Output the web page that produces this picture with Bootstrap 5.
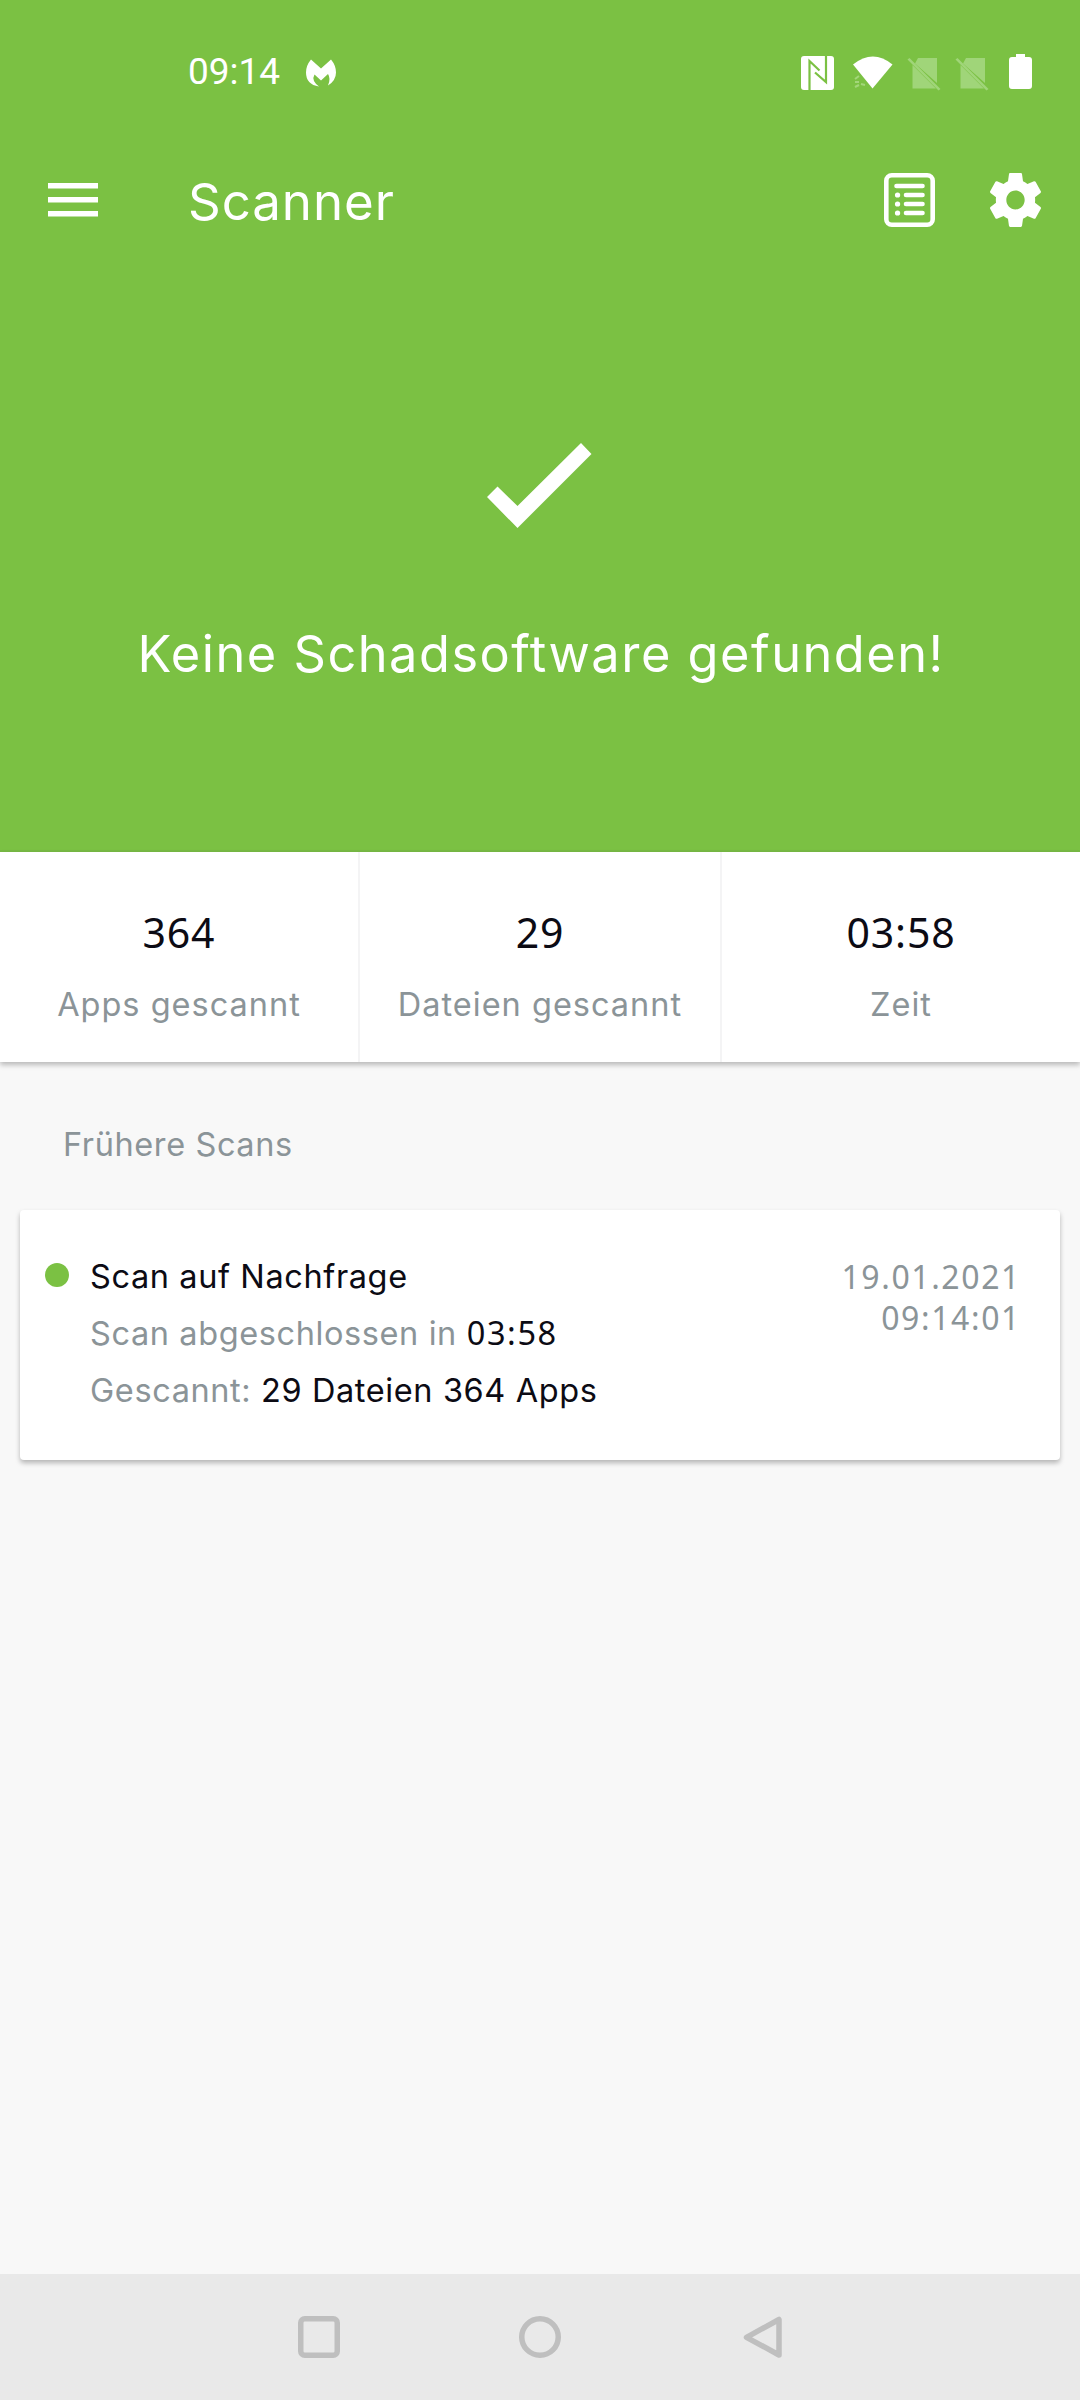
<!DOCTYPE html>
<html lang="de">
<head>
<meta charset="utf-8">
<meta name="viewport" content="width=device-width, initial-scale=1">
<title>Scanner</title>
<link href="https://cdn.jsdelivr.net/npm/bootstrap@5.3.0/dist/css/bootstrap.min.css" rel="stylesheet">
<style>
  :root { --scan-green: #7bc143; --scan-ink: #0c0b14; --scan-muted: #8b9498; }
  body { font-family: Inter, "Noto Sans", sans-serif; color: var(--scan-ink); background: #f8f8f8; font-size: 32.5px; letter-spacing: .6px; }
  svg { display: block; flex: none; }
  .phone { height: 2400px; overflow: hidden; }
  .top-green { background: var(--scan-green); height: 852px; border-bottom: 2px solid #77b944; }
  .status-bar { padding: 45px 48px 0 188px; height: 98px; }
  .clock { font-family: Roboto, sans-serif; font-size: 37px; letter-spacing: 0; line-height: 53px; width: 118px; }
  .app-bar { height: 204px; padding: 0 39px 0 48px; }
  .app-title { font-size: 51px; line-height: 70px; letter-spacing: .95px; margin: 3px 0 0 90px; }
  .gear { margin-left: 55px; }
  .hero { padding-top: 141px; }
  .tick { margin: 0 auto; padding-right: 1px; }
  .hero-text { font-size: 50.5px; line-height: 70px; letter-spacing: 1.5px; margin-top: 91px; padding-left: 2px; }
  .stats { height: 210px; box-shadow: 0 3px 5px rgba(0,0,0,.25); position: relative; }
  .stat { padding-top: 50px; }
  .stat:nth-child(1) { border-right: 2px solid #f4f4f5; }
  .stat:nth-child(3) { border-left: 2px solid #f4f4f5; }
  .stat-num { font-family: "Noto Sans", sans-serif; font-size: 41px; line-height: 60px; letter-spacing: .8px; }
  .stat-label { line-height: 46px; letter-spacing: 1px; margin-top: 20px; }
  .muted { color: var(--scan-muted); }
  .section-title { margin: 60px 0 0 63px; line-height: 46px; }
  .scan-card { margin: 42px 20px 0 20px; height: 250px; border-radius: 4px; background: #fff; box-shadow: 0 3px 5px rgba(0,0,0,.27); padding: 38px 39px 0 25px; }
  .dot { width: 24px; height: 24px; border-radius: 50%; background: var(--scan-green); margin: 15px 21px 0 0; flex: none; }
  .scan-line { line-height: 57px; }
  .scan-num { font-family: "Noto Sans", sans-serif; line-height: 1; letter-spacing: 1.6px; }
  .scan-date { font-family: "Noto Sans", sans-serif; font-size: 32px; line-height: 41px; letter-spacing: 1.6px; margin-top: 8px; }
  .nav-strip { height: 126px; background: #e9e9e9; padding: 42px 298px 0; }
</style>
<script src="https://cdn.jsdelivr.net/npm/bootstrap@5.3.0/dist/js/bootstrap.bundle.min.js"></script>
</head>
<body>
<div class="phone d-flex flex-column">
  <header class="top-green text-white">
    <div class="status-bar d-flex align-items-start">
      <div class="clock">09:14</div>
      <svg width="30" height="54" viewBox="306 45.500 30 54" fill="#fff"><path d="M311 60 L321 69 L331 60 Q336 66 336 73 Q336 81 328 86 Q331 79 328 74.500 L321 81 L314.500 75 Q311 81 319 87 Q306 85 306 73 Q306 66 311 60Z"/></svg>
      <svg class="ms-auto" width="231" height="54" viewBox="801 45 231 54">
        <rect x="801" y="56" width="33" height="34" rx="3" fill="#fff"/>
        <path d="M809.500 90V61L819.500 70.500M826 56V82L815 72.500" fill="none" stroke="#7bc143" stroke-width="2.200"/>
        <path d="M853 64.500Q873 48.500 892.500 64.500L872.500 88.500Z" fill="#fff"/>
        <path d="M855 79l4-3M855 82h4M855 87l4-2M861 84l4 1" stroke="#a3d67a" stroke-width="2"/>
        <g fill="#a0d579">
          <path d="M918 58h19v25L915 63.500ZM912.500 65L936 88.500H912.500Z"/>
          <path d="M907.500 59.500l2-1.500 31 31-2 1.500Z"/>
          <path d="M966 58h19v25L963 63.500ZM960.500 65L984 88.500H960.500Z"/>
          <path d="M955.500 59.500l2-1.500 31 31-2 1.500Z"/>
        </g>
        <path d="M1016 54h9v3h4q3 0 3 3v26q0 3-3 3h-17q-3 0-3-3V60q0-3 3-3h4Z" fill="#fff"/>
      </svg>
    </div>
    <div class="app-bar d-flex align-items-center">
      <svg width="50" height="34" fill="#fff"><path d="M0 0h50v5.500H0zM0 14h50v5.500H0zM0 28h50v5.500H0z"/></svg>
      <div class="app-title">Scanner</div>
      <svg class="ms-auto" width="51" height="54" viewBox="0 0 51 54" fill="none" stroke="#fff" stroke-linecap="round">
        <rect x="2.300" y="2.300" width="46.400" height="49.400" rx="5.500" stroke-width="4.600"/>
        <path d="M12.500 13h26M22 22h16.500M22 31h16.500M22 40h16.500" stroke-width="4.600"/>
        <path d="M13.500 22h.1M13.500 31h.1M13.500 40h.1" stroke-width="5.200"/>
      </svg>
      <svg class="gear" width="51" height="54" viewBox="2.270 2 19.460 20" preserveAspectRatio="none" fill="#fff"><path d="M19.430 12.980c.04-.32.070-.64.070-.98s-.03-.66-.07-.98l2.110-1.650c.19-.15.240-.42.120-.64l-2-3.460c-.12-.22-.39-.3-.61-.22l-2.490 1c-.52-.4-1.080-.73-1.690-.98l-.38-2.650C14.460 2.180 14.250 2 14 2h-4c-.25 0-.46.180-.49.420l-.38 2.650c-.61.250-1.170.590-1.690.980l-2.490-1c-.23-.09-.49 0-.61.220l-2 3.460c-.13.220-.07.490.12.640l2.110 1.650c-.04.320-.07.650-.07.980s.03.660.070.980l-2.110 1.650c-.19.150-.24.420-.12.640l2 3.460c.12.220.390.300.610.220l2.490-1c.52.400 1.080.730 1.690.980l.38 2.650c.03.240.240.420.490.420h4c.25 0 .46-.18.490-.42l.38-2.650c.61-.25 1.170-.59 1.690-.98l2.490 1c.23.090.490 0 .61-.22l2-3.460c.12-.22.070-.49-.12-.64l-2.110-1.650zM12 15.500c-1.930 0-3.500-1.570-3.500-3.500s1.570-3.500 3.500-3.500 3.500 1.570 3.500 3.500-1.570 3.500-3.500 3.500z"/></svg>
    </div>
    <div class="hero text-center">
      <svg class="tick" width="106" height="85" fill="#fff"><path d="M0 54L10.500 43.500 30.500 63 94 0 104.500 11 30.500 85Z"/></svg>
      <div class="hero-text">Keine Schadsoftware gefunden!</div>
    </div>
  </header>

  <section class="stats row g-0 bg-white text-center">
    <div class="stat col-4"><div class="stat-num">364</div><div class="stat-label muted">Apps gescannt</div></div>
    <div class="stat col-4"><div class="stat-num">29</div><div class="stat-label muted">Dateien gescannt</div></div>
    <div class="stat col-4"><div class="stat-num">03:58</div><div class="stat-label muted">Zeit</div></div>
  </section>

  <main class="flex-grow-1">
    <div class="section-title muted">Frühere Scans</div>
    <article class="scan-card d-flex align-items-start">
      <span class="dot"></span>
      <div class="flex-grow-1">
        <div class="scan-line">Scan auf Nachfrage</div>
        <div class="scan-line"><span class="muted">Scan abgeschlossen in</span> <span class="scan-num">03:58</span></div>
        <div class="scan-line"><span class="muted">Gescannt:</span> 29 Dateien 364 Apps</div>
      </div>
      <div class="scan-date muted text-end">19.01.2021<br>09:14:01</div>
    </article>
  </main>

  <nav class="nav-strip d-flex justify-content-between align-items-start">
    <svg width="42" height="42" fill="none" stroke="#bfbfbf" stroke-width="5.500"><rect x="2.750" y="2.750" width="36.500" height="36.500" rx="4"/></svg>
    <svg width="42" height="42" fill="none" stroke="#bfbfbf" stroke-width="5.500"><circle cx="21" cy="21" r="18.250"/></svg>
    <svg width="42" height="42" fill="none" stroke="#bfbfbf" stroke-width="5.500" stroke-linejoin="round"><path d="M39 3.500v35.500L6.500 21.300Z"/></svg>
  </nav>
</div>
</body>
</html>
